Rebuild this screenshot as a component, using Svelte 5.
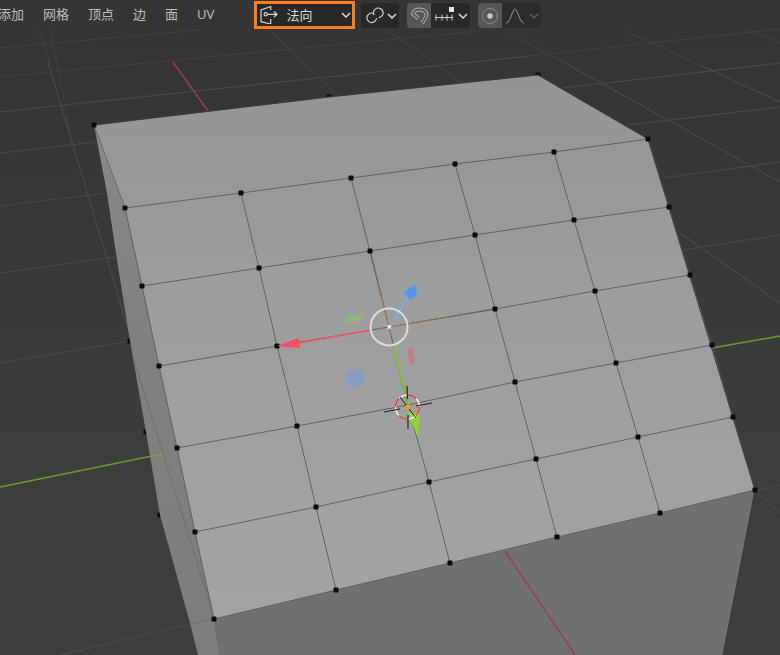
<script lang="ts">
  const menus = ['添加', '网格', '顶点', '边', '面', 'UV'];

  // mesh vertices of the top face, read off row by row
  const rows = [
    [[125, 208], [241, 193], [351, 178], [455, 164], [554, 152], [648, 139]],
    [[142, 286], [259, 268], [370, 251], [475, 235], [574, 220], [669, 207]],
    [[159, 366], [277, 346], [389, 327], [495, 309], [595, 291], [690, 275]],
    [[177, 448], [297, 426], [408, 405], [515, 382], [616, 363], [712, 345]],
    [[195, 532], [316, 507], [429, 482], [536, 459], [638, 437], [733, 417]],
    [[214, 619], [336, 590], [450, 563], [557, 537], [660, 513], [755, 490]]
  ];
  const columns = rows[0].map((_, i) => rows.map((r) => r[i]));
  const pts = (list: number[][]) => list.map((p) => p.join(',')).join(' ');

  // verts that sit on the silhouette, half covered by the faces drawn after them
  const hiddenVerts = [[329, 97], [538, 75], [130, 341], [146, 432], [160, 515]];
  const verts = [...rows.flat().filter((p) => !(p[0] === 389 || p[0] === 408)), [94, 125]];

  const topFace = pts([
    [94, 125], [329, 97], [538, 75], [648, 139],
    ...columns[5].slice(1),
    ...[...rows[5]].reverse().slice(1),
    ...[...columns[0]].reverse().slice(1)
  ]);

  // floor grid lines [x1, y1, x2, y2]
  const farFloor = [
    [0, 48, 200, 30], [38, 30, 50, 62], [50, 28, 72, 143], [385, 28, 463, 83],
    [270, 30, 338, 96], [747, 30, 780, 43], [623, 30, 700, 65], [510, 33, 563, 62],
    [290, 49, 480, 31], [0, 77, 290, 49], [530, 56, 780, 29]
  ];
  const floor = [
    [0, 112, 318, 78], [318, 78, 530, 56],
    [0, 153, 97, 142], [0, 206, 105, 193], [0, 273, 115, 257], [0, 363, 130, 341],
    [60, 655, 190, 624], [563, 88, 780, 63], [628, 125, 780, 107], [662, 178, 780, 162],
    [683, 250, 780, 235], [756, 491, 780, 485], [700, 65, 780, 102],
    [563, 62, 780, 182], [680, 233, 780, 303],
    [756, 491, 780, 513], [48, 62, 130, 335]
  ];
</script>

<div class="viewport">
  <svg class="scene" viewBox="0 0 780 655" width="780" height="655" aria-hidden="true">
    <defs>
      <linearGradient id="topShade" x1="0" y1="0" x2="0" y2="1">
        <stop offset="0" stop-color="#939495" />
        <stop offset="0.35" stop-color="#9b9c9d" />
        <stop offset="1" stop-color="#a2a3a4" />
      </linearGradient>
      <linearGradient id="sideShade" x1="0" y1="0" x2="0" y2="1">
        <stop offset="0" stop-color="#878987" />
        <stop offset="0.45" stop-color="#7f817f" />
        <stop offset="1" stop-color="#7c7e7c" />
      </linearGradient>
      <linearGradient id="activeUp" gradientUnits="userSpaceOnUse" x1="370" y1="251" x2="389" y2="327">
        <stop offset="0" stop-color="#5f5f5f" />
        <stop offset="1" stop-color="#a87a48" />
      </linearGradient>
      <linearGradient id="activeRight" gradientUnits="userSpaceOnUse" x1="389" y1="327" x2="495" y2="309">
        <stop offset="0" stop-color="#a87a48" />
        <stop offset="1" stop-color="#5f5f5f" />
      </linearGradient>
    </defs>

    {#each farFloor as l}
      <line x1={l[0]} y1={l[1]} x2={l[2]} y2={l[3]} class="floor far" />
    {/each}
    {#each floor as l}
      <line x1={l[0]} y1={l[1]} x2={l[2]} y2={l[3]} class="floor" />
    {/each}
    <line x1="173" y1="62" x2="208" y2="111" class="axis-x" />
    <line x1="0" y1="487" x2="152" y2="456" class="axis-y" />
    <line x1="712" y1="348" x2="780" y2="336" class="axis-y" />

    {#each hiddenVerts as v}
      <rect x={v[0] - 2.5} y={v[1] - 2.5} width="5" height="5" rx="1" class="vert" />
    {/each}

    <polygon points="94,125 107,193 117,260 130,341 146,432 160,515 190,623 198,655 220,655 214,619 195,532 177,448 159,366 142,286 125,208" fill="url(#sideShade)" />
    <line x1="152" y1="456" x2="165" y2="454" class="axis-y faded" />
    <line x1="133" y1="357" x2="215" y2="620" class="side-edge" />
    <line x1="214" y1="619" x2="220" y2="655" class="side-edge" />
    <line x1="190" y1="624" x2="214" y2="619" class="side-edge" />

    <polygon points="214,619 336,590 450,563 557,537 660,513 755,490 723,655 219,655" fill="#707070" />
    <line x1="505" y1="551" x2="575" y2="655" class="axis-x" />
    <line x1="755" y1="491" x2="723" y2="655" class="outline" />

    <polygon points={topFace} fill="url(#topShade)" />
    <polyline points="94,125 329,97 538,75 648,139 755,490" class="outline" />
    <polyline points="94,125 125,208" class="side-edge" />

    {#each rows as row}
      <polyline points={pts(row)} class="edge" />
    {/each}
    {#each columns as col, i}
      {#if i > 0 && i < 5}
        <polyline points={pts(col)} class="edge" />
      {/if}
    {/each}
    <polyline points={pts(columns[0])} class="edge" />
    <polyline points={pts(columns[5])} class="rim" />

    <line x1="370" y1="251" x2="389" y2="327" stroke="url(#activeUp)" class="active" />
    <line x1="389" y1="327" x2="495" y2="309" stroke="url(#activeRight)" class="active" />

    {#each verts as v}
      <rect x={v[0] - 2.5} y={v[1] - 2.5} width="5" height="5" rx="1" class="vert" />
    {/each}

    <!-- transform gizmo -->
    <line x1="372" y1="330" x2="298" y2="343" class="shaft-x" />
    <polygon points="277,346 299,338 300,348" fill="#ff4d63" />
    <line x1="394" y1="346" x2="412" y2="418" class="shaft-y" />
    <polygon points="408,412 420,414 418,438" fill="#8fd62e" />
    <line x1="394" y1="320" x2="408" y2="297" class="shaft-z" />
    <polygon points="404,293 415,284 417,296 410,300" fill="#5b93f0" />
    <polygon points="345,322 349,317 362,315 359,320" class="plane-y" />
    <polygon points="408,350 412,348 414,360 411,365" class="plane-x" />
    <polygon points="348,373 361,371 364,383 351,386" class="plane-z" />
    <circle cx="389" cy="327" r="18.5" class="ring" />
    <rect x="387.5" y="325" width="3.6" height="3.6" fill="#e8e8e8" />

    <!-- 3D cursor -->
    <circle cx="407.5" cy="407" r="12" class="cursor-white" />
    <circle cx="407.5" cy="407" r="12" class="cursor-red" />
    <line x1="407" y1="386" x2="407.5" y2="399" class="cross" />
    <line x1="408" y1="415" x2="408" y2="429" class="cross" />
    <line x1="384" y1="412" x2="400" y2="409" class="cross" />
    <line x1="416" y1="406" x2="432" y2="403" class="cross" />
    <line x1="400" y1="397" x2="416" y2="418" class="cross thin" />
    <circle cx="408" cy="407" r="2.4" fill="#f79a22" />
  </svg>

  <header class="topbar">
    <nav class="menus">
      {#each menus as m}
        <span>{m}</span>
      {/each}
    </nav>

    <div class="tools">
      <div class="select">
        <svg width="18" height="18" viewBox="0 0 18 18" class="ic">
          <path d="M10.7 4V.5L1 4v11.7l9.7 2.3v-5" />
          <circle cx="5.7" cy="8.3" r="1.6" />
          <path d="M7.3 8.3H17M14 5.5l3 2.8-3 2.7" />
        </svg>
        <span class="label">法向</span>
        <svg width="10" height="6" viewBox="0 0 10 6" class="chev"><path d="M1 1l4 4 4-4" /></svg>
      </div>

      <div class="group link">
        <svg width="20" height="18" viewBox="0 0 20 18" class="ic">
          <path d="M8.2 6.7A4.8 4.8 0 1 0 10.5 11" />
          <path d="M8 8A4.8 4.8 0 1 1 12.6 10.6" />
        </svg>
        <svg width="10" height="6" viewBox="0 0 10 6" class="chev"><path d="M1 1l4 4 4-4" /></svg>
      </div>

      <div class="group snap">
        <span class="on">
          <svg width="20" height="18" viewBox="0 0 20 18">
            <path class="mag-out" d="M9.5 11.5L4 7Q5 2.5 11 2.5Q17 3 17.5 8Q17 11 13 16" />
            <path class="mag-in" d="M9.5 11.5L4 7Q5 2.5 11 2.5Q17 3 17.5 8Q17 11 13 16" />
          </svg>
        </span>
        <span class="rest">
          <svg width="20" height="18" viewBox="0 0 20 18" class="ic thin">
            <rect x="15" y="0" width="5" height="5" fill="#e6e6e6" stroke="none" />
            <path d="M1 10.5H19M2 7.5v6M8 7.5v6M13 7.5v6M18 7.5v6" />
          </svg>
          <svg width="10" height="6" viewBox="0 0 10 6" class="chev"><path d="M1 1l4 4 4-4" /></svg>
        </span>
      </div>

      <div class="group prop">
        <span class="on">
          <svg width="18" height="18" viewBox="0 0 18 18">
            <circle cx="9" cy="9" r="7.5" fill="none" stroke="#8a8a8a" />
            <circle cx="9" cy="9" r="2.8" fill="#c8c8c8" />
          </svg>
        </span>
        <span class="rest">
          <svg width="20" height="18" viewBox="0 0 20 18" class="ic dim">
            <path d="M1 16C6 16 7 2 10 2S14 16 19 16" />
          </svg>
          <svg width="10" height="6" viewBox="0 0 10 6" class="chev dim"><path d="M1 1l4 4 4-4" /></svg>
        </span>
      </div>
    </div>
  </header>
</div>

<style>
  :global(body) { margin: 0; background: #3a3a3a; }
  .viewport {
    position: relative;
    width: 780px;
    height: 655px;
    overflow: hidden;
    background: linear-gradient(#353535, #363636 15%, #3d3d3d 70%, #3e3e3e);
    font-family: "Noto Sans", "Noto Sans CJK SC", sans-serif;
  }
  .scene { position: absolute; inset: 0; display: block; }

  .floor { stroke: #4a4a4a; stroke-width: 1.2; }
  .floor.far { stroke: #414141; }
  .axis-x { stroke: #a23c4d; stroke-width: 1.5; }
  .axis-y { stroke: #6d9a2c; stroke-width: 1.5; }
  .faded { stroke: #7f9c55; }
  .outline { fill: none; stroke: #3a3a3a; stroke-width: 1; }
  .side-edge { fill: none; stroke: #6e706e; stroke-width: 1; }
  .edge { fill: none; stroke: #626262; stroke-width: 1; }
  .rim { fill: none; stroke: #45474a; stroke-width: 1; }
  .active { stroke-width: 1.2; }
  .vert { fill: #0c0c0c; }

  .shaft-x { stroke: #ff4d63; stroke-width: 1.6; }
  .shaft-y { stroke: #83c832; stroke-width: 1.8; }
  .shaft-z { stroke: #7ea8ea; stroke-width: 2; }
  .plane-y { fill: #8fb672; stroke: #96c070; stroke-width: 0.7; }
  .plane-x { fill: #bb8388; stroke: #e0636e; stroke-width: 0.7; }
  .plane-z { fill: #8a9cbc; stroke: #6a9cf2; stroke-width: 1; }
  .ring { fill: none; stroke: #dcdcdc; stroke-width: 2; }
  .cursor-white { fill: none; stroke: #f2f2f2; stroke-width: 1.5; }
  .cursor-red { fill: none; stroke: #e8313a; stroke-width: 1.5; stroke-dasharray: 9.4 9.4; }
  .cross { stroke: #222; stroke-width: 1.2; }
  .cross.thin { stroke-width: 1; }

  .topbar {
    position: relative;
    display: flex;
    align-items: center;
    height: 30px;
    color: #bdbdbd;
    font-size: 13px;
  }
  .menus {
    display: flex;
    gap: 19px;
    margin-left: -2px;
    padding-bottom: 2px;
    line-height: 27px;
  }
  .tools {
    display: flex;
    align-items: center;
    gap: 8px;
    margin-left: 40px;
  }
  .select {
    box-sizing: border-box;
    display: flex;
    align-items: center;
    width: 101px;
    height: 28px;
    margin-right: -2px;
    padding: 0 1px 0 3px;
    border: 3px solid #ff7f1e;
    background: #282828;
    color: #dcdcdc;
  }
  .select .ic { flex: none; }
  .label { margin-left: 8px; flex: 1; padding-bottom: 2px; }

  .group {
    display: flex;
    align-items: stretch;
    height: 25px;
    margin-top: 1px;
    border-radius: 4px;
    background: #282828;
    overflow: hidden;
  }
  .group span { display: flex; align-items: center; justify-content: center; }
  .link { align-items: center; width: 38px; padding-left: 5px; gap: 1px; box-sizing: border-box; }
  .on { width: 24px; background: #565656; }
  .snap .rest { width: 39px; gap: 4px; padding-left: 1px; box-sizing: border-box; }
  .prop { background: #2c2c2c; }
  .prop .rest { width: 39px; gap: 4px; box-sizing: border-box; }

  .ic { fill: none; stroke: #d2d2d2; stroke-width: 1.2; }
  .ic.thin { stroke-width: 1; }
  .ic.dim { stroke: #858585; }
  .chev { fill: none; stroke: #dcdcdc; stroke-width: 1.5; }
  .chev.dim { stroke: #5f5f5f; }
  .mag-out { fill: none; stroke: #b0b0b0; stroke-width: 3.8; }
  .mag-in { fill: none; stroke: #565656; stroke-width: 1.8; }
</style>
